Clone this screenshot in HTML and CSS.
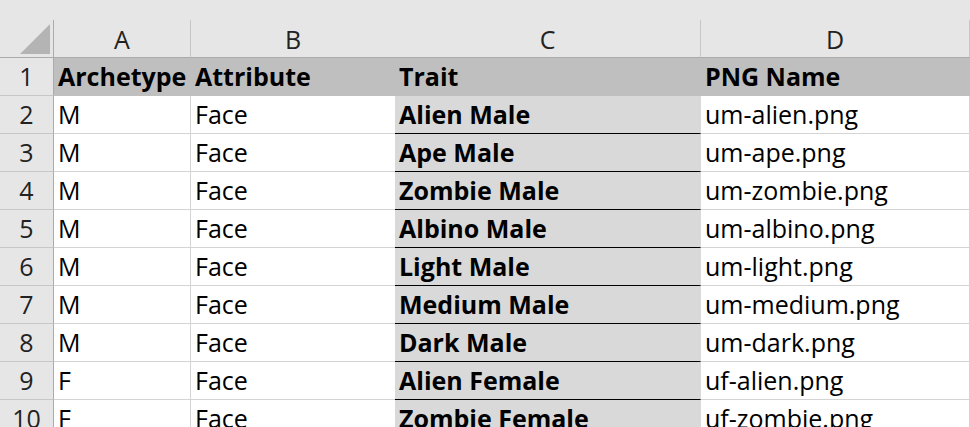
FILE: index.html
```html
<!DOCTYPE html>
<html lang="en">
<head>
    <meta charset="UTF-8">
    <meta name="viewport" content="width=device-width, initial-scale=1.0">
    <title>Punks Traits</title>
    <link rel="stylesheet" href="styles.css">
</head>
<body>
    <!-- Strip above the column headers -->
    <div class="top-band"></div>
    <div class="sheet">
        <!-- Column headers -->
        <div class="corner"><span class="select-all"></span></div>
        <div class="col-head">A</div>
        <div class="col-head col-b">B</div>
        <div class="col-head">C</div>
        <div class="col-head">D</div>

        <!-- Row 1 -->
        <div class="row-head">1</div>
        <div class="cell title">Archetype</div>
        <div class="cell title col-b">Attribute</div>
        <div class="cell title">Trait</div>
        <div class="cell title">PNG Name</div>

        <div class="row-head">2</div>
        <div class="cell">M</div>
        <div class="cell col-b">Face</div>
        <div class="cell trait">Alien Male</div>
        <div class="cell">um-alien.png</div>

        <div class="row-head">3</div>
        <div class="cell">M</div>
        <div class="cell col-b">Face</div>
        <div class="cell trait">Ape Male</div>
        <div class="cell">um-ape.png</div>

        <div class="row-head">4</div>
        <div class="cell">M</div>
        <div class="cell col-b">Face</div>
        <div class="cell trait">Zombie Male</div>
        <div class="cell">um-zombie.png</div>

        <div class="row-head">5</div>
        <div class="cell">M</div>
        <div class="cell col-b">Face</div>
        <div class="cell trait">Albino Male</div>
        <div class="cell">um-albino.png</div>

        <div class="row-head">6</div>
        <div class="cell">M</div>
        <div class="cell col-b">Face</div>
        <div class="cell trait">Light Male</div>
        <div class="cell">um-light.png</div>

        <div class="row-head">7</div>
        <div class="cell">M</div>
        <div class="cell col-b">Face</div>
        <div class="cell trait">Medium Male</div>
        <div class="cell">um-medium.png</div>

        <div class="row-head">8</div>
        <div class="cell">M</div>
        <div class="cell col-b">Face</div>
        <div class="cell trait">Dark Male</div>
        <div class="cell">um-dark.png</div>

        <div class="row-head">9</div>
        <div class="cell">F</div>
        <div class="cell col-b">Face</div>
        <div class="cell trait">Alien Female</div>
        <div class="cell">uf-alien.png</div>

        <div class="row-head">10</div>
        <div class="cell">F</div>
        <div class="cell col-b">Face</div>
        <div class="cell trait">Zombie Female</div>
        <div class="cell">uf-zombie.png</div>
    </div>
</body>
</html>
```

FILE: styles.css
```css
body {
    font-family: 'Open Sans', 'Noto Sans', sans-serif;
    font-size: 25px;
    margin: 0;
    padding: 0;
    color: #000;
    background-color: #fff;
    overflow: hidden;
}
/* Header strip */
.top-band {
    height: 20px;
    background: #e6e6e6;
}
/* Grid */
.sheet {
    display: grid;
    grid-template-columns: 54px 137px 204px 306px 1fr;
    grid-auto-rows: 38px;
}
.sheet > div {
    box-sizing: border-box;
    white-space: nowrap;
    overflow: hidden;
}
.corner {
    display: flex;
    align-items: flex-end;
    justify-content: flex-end;
    padding: 0 3px 3px 0;
    background: #e6e6e6;
    border-right: 1px solid #ababab;
    border-bottom: 1px solid #ababab;
}
.select-all {
    width: 0;
    height: 0;
    border-left: 30px solid transparent;
    border-bottom: 30px solid #b4b4b4;
}
.col-head {
    background: #e6e6e6;
    color: #222;
    text-align: center;
    line-height: 37px;
    padding-top: 1px;
    border-right: 1px solid #c6c6c6;
    border-bottom: 1px solid #ababab;
}
.row-head {
    background: #e6e6e6;
    color: #222;
    text-align: center;
    line-height: 37px;
    border-right: 1px solid #ababab;
    border-bottom: 1px solid #c6c6c6;
}
/* Cells */
.cell {
    padding-left: 4px;
    line-height: 37px;
    border-right: 1px solid #d4d4d4;
    border-bottom: 1px solid #d4d4d4;
}
.sheet .col-b {
    border-right: none;
}
.cell.title {
    font-weight: bold;
    background: #bfbfbf;
    border-color: #bfbfbf;
}
.cell.trait {
    font-weight: bold;
    background: #d9d9d9;
    border-right-color: #d9d9d9;
    border-bottom-color: #000;
}
```
